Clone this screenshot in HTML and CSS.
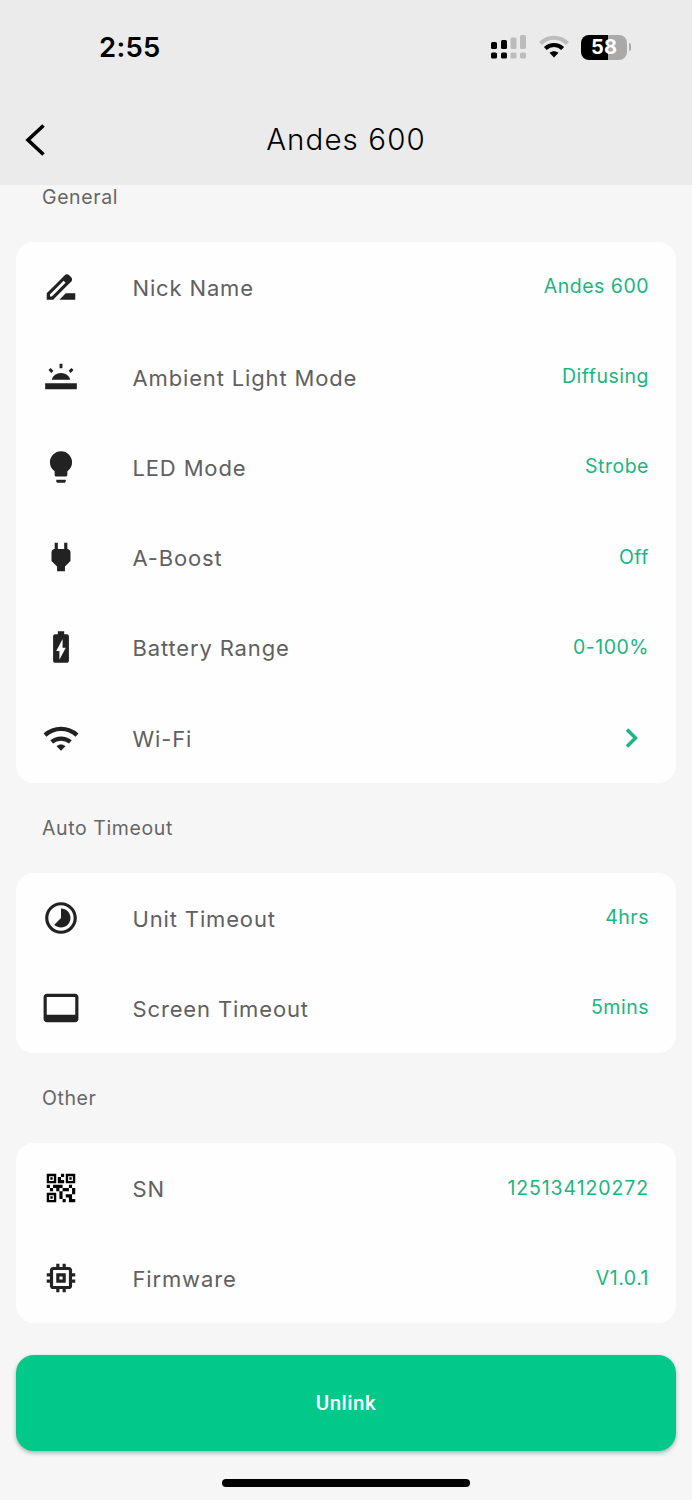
FILE: index.html
```html
<!DOCTYPE html>
<html lang="en">
<head>
  <meta charset="UTF-8">
  <meta name="viewport" content="width=device-width, initial-scale=1.0">
  <title>Andes 600</title>
  <link rel="stylesheet" href="styles.css">
</head>
<body>
  <header class="header">
    <div class="status-bar">
      <span class="time">2:55</span>
      <div class="status-icons">
        <svg class="signal" width="36" height="25" viewBox="0 0 36 25">
          <g fill="#000">
            <rect x="1" y="7" width="6" height="7" rx="1.5"/>
            <rect x="1" y="17.500" width="6" height="6" rx="1.5"/>
            <rect x="11" y="5" width="6" height="9" rx="1.5"/>
            <rect x="11" y="17.500" width="6" height="6" rx="1.5"/>
          </g>
          <g fill="#bcbcbc">
            <rect x="20.500" y="2.500" width="6" height="11.500" rx="1.5"/>
            <rect x="20.500" y="17.500" width="6" height="6" rx="1.5"/>
            <rect x="30" y="0" width="6" height="14" rx="1.5"/>
            <rect x="30" y="17.500" width="6" height="6" rx="1.5"/>
          </g>
        </svg>
        <svg class="status-wifi" width="32" height="24" viewBox="0 0 32 24" fill="none" stroke-width="4">
          <path d="M2.500 8.500C10 .8 22 .8 29.500 8.500" stroke="#bcbcbc"/>
          <path d="M7.300 13.500c5-4.800 12.400-4.800 17.400 0" stroke="#000"/>
          <path d="M16 22.500l-4.500-4.700c2.600-2.200 6.400-2.200 9 0z" fill="#000"/>
        </svg>
        <div class="battery">
          <span class="battery-level">58</span>
          <span class="battery-tip"></span>
        </div>
      </div>
    </div>
    <div class="nav">
      <svg class="back" width="24" height="36" viewBox="0 0 24 36" fill="none" stroke="#000" stroke-width="3.600">
        <path d="M20.500 3.500L5 18 20.500 32.500"/>
      </svg>
      <h1 class="title">Andes 600</h1>
    </div>
  </header>

  <main class="content">
    <h2 class="section-title first">General</h2>
    <div class="card">
      <div class="row">
        <svg class="icon" viewBox="0 0 24 24"><path d="M18.410 5.800L17.200 4.590c-.78-.78-2.050-.78-2.830 0l-2.680 2.680L3 15.960V20h4.040l8.740-8.740 2.630-2.630c.79-.78.79-2.050 0-2.830zM6.210 18H5v-1.210l8.660-8.660 1.210 1.210L6.210 18zM11 20l4-4h6v4H11z"/></svg>
        <span class="label">Nick Name</span>
        <span class="value">Andes 600</span>
      </div>
      <div class="row">
        <svg class="icon" viewBox="0 0 24 24"><path d="M2 16h20v3.700H2zM6.100 13.700a6.200 6.200 0 0 1 11.800 0zM11.100 3.700h1.800v2.700h-1.800zM4.100 7.600l1.300-1.300 1.800 1.800-1.300 1.300zM16.800 8.100l1.800-1.800 1.300 1.300-1.800 1.800z"/></svg>
        <span class="label">Ambient Light Mode</span>
        <span class="value">Diffusing</span>
      </div>
      <div class="row">
        <svg class="icon" viewBox="0 0 24 24"><path d="M9 21c0 .55.45 1 1 1h4c.55 0 1-.45 1-1v-1H9v1zm3-19C8.140 2 5 5.140 5 9c0 2.380 1.190 4.470 3 5.740V17c0 .55.45 1 1 1h6c.55 0 1-.45 1-1v-2.260c1.810-1.270 3-3.360 3-5.740 0-3.860-3.140-7-7-7z"/></svg>
        <span class="label">LED Mode</span>
        <span class="value">Strobe</span>
      </div>
      <div class="row">
        <svg class="icon" viewBox="0 0 24 24"><path d="M16.010 7L16 3h-2v4h-4V3H8v4h-.01C7 6.990 6 7.990 6 8.990v5.490L9.500 18v3h5v-3l3.500-3.510v-5.500c0-1-1-2-1.990-1.990z"/></svg>
        <span class="label">A-Boost</span>
        <span class="value">Off</span>
      </div>
      <div class="row">
        <svg class="icon" viewBox="0 0 24 24"><path d="M15.670 4H14V2h-4v2H8.330C7.600 4 7 4.600 7 5.330v15.330C7 21.400 7.600 22 8.330 22h7.330c.74 0 1.340-.6 1.340-1.330V5.330C17 4.600 16.400 4 15.670 4zM11 20v-5.500H9L13 7v5.500h2L11 20z"/></svg>
        <span class="label">Battery Range</span>
        <span class="value">0-100%</span>
      </div>
      <div class="row">
        <svg class="icon" viewBox="0 0 24 24"><g fill="none" stroke="#222" stroke-width="2.700"><path d="M1.900 10.200c5.800-5.200 14.400-5.200 20.200 0"/><path d="M6.100 14.500c3.400-2.900 8.400-2.900 11.800 0"/></g><path d="M12 20l-2.800-2.800c1.600-1.400 4-1.400 5.600 0z"/></svg>
        <span class="label">Wi-Fi</span>
        <svg class="chevron" width="14" height="20" viewBox="0 0 14 20" fill="none" stroke="#1cb57f" stroke-width="3.500"><path d="M2 1.500L10.500 10 2 18.500"/></svg>
      </div>
    </div>

    <h2 class="section-title">Auto Timeout</h2>
    <div class="card">
      <div class="row">
        <svg class="icon" viewBox="0 0 24 24"><path d="M16.240 7.760C15.070 6.590 13.540 6 12 6v6l-4.240 4.240c2.340 2.340 6.140 2.340 8.490 0 2.340-2.340 2.340-6.140-.01-8.480zM12 2C6.480 2 2 6.480 2 12s4.480 10 10 10 10-4.480 10-10S17.520 2 12 2zm0 18c-4.420 0-8-3.580-8-8s3.580-8 8-8 8 3.580 8 8-3.580 8-8 8z"/></svg>
        <span class="label">Unit Timeout</span>
        <span class="value">4hrs</span>
      </div>
      <div class="row">
        <svg class="icon" viewBox="0 0 24 24"><path d="M21 3H3c-1.100 0-2 .9-2 2v14c0 1.100.9 2 2 2h18c1.100 0 2-.9 2-2V5c0-1.100-.9-2-2-2zm0 13.300H3V5h18v11.300z"/></svg>
        <span class="label">Screen Timeout</span>
        <span class="value">5mins</span>
      </div>
    </div>

    <h2 class="section-title">Other</h2>
    <div class="card">
      <div class="row">
        <svg class="icon dark" viewBox="0 0 24 24"><path d="M15 21h-2v-2h2v2zm-2-7h-2v5h2v-5zm8-2h-2v4h2v-4zm-2-2h-2v2h2v-2zM7 12H5v2h2v-2zm-2-2H3v2h2v-2zm7-5h2V3h-2v2zm-7.500-.5v3h3v-3h-3zM9 9H3V3h6v6zm-4.500 7.500v3h3v-3h-3zM9 21H3v-6h6v6zm7.500-16.500v3h3v-3h-3zM21 9h-6V3h6v6zm-2 10v-3h-4v2h2v3h4v-2h-2zm-2-7h-4v2h4v-2zm-4-2H7v2h2v2h2v-2h2v-2zm1-1V7h-2V5h-2v4h4zM6.750 5.250h-1.500v1.500h1.500v-1.500zm0 12h-1.500v1.500h1.500v-1.500zm12-12h-1.500v1.500h1.500v-1.500z"/></svg>
        <span class="label">SN</span>
        <span class="value serial">125134120272</span>
      </div>
      <div class="row">
        <svg class="icon" viewBox="0 0 24 24"><path d="M15 9H9v6h6V9zm-2 4h-2v-2h2v2zm8-2V9h-2V7c0-1.100-.9-2-2-2h-2V3h-2v2h-2V3H9v2H7c-1.100 0-2 .9-2 2v2H3v2h2v2H3v2h2v2c0 1.100.9 2 2 2h2v2h2v-2h2v2h2v-2h2c1.100 0 2-.9 2-2v-2h2v-2h-2v-2h2zm-4 6H7V7h10v10z"/></svg>
        <span class="label">Firmware</span>
        <span class="value">V1.0.1</span>
      </div>
    </div>

    <button type="button" class="unlink">Unlink</button>
    <div class="home-bar"></div>
  </main>
</body>
</html>
```
FILE: styles.css
```css
* {
  box-sizing: border-box;
}

body {
  margin: 0;
  height: 1500px;
  overflow: hidden;
  background-color: #f6f6f6;
  font-family: Inter, Roboto, sans-serif;
}

.header {
  height: 185px;
  background-color: #ebebeb;
}

.status-bar {
  display: flex;
  justify-content: space-between;
  align-items: center;
  height: 94px;
  padding: 0 61px 0 99px;
}

.time {
  font-size: 27.500px;
  font-weight: 600;
  letter-spacing: 0.3px;
}

.status-icons {
  display: flex;
  align-items: center;
}

.status-wifi {
  margin: 0 11px 0 12px;
}

.battery {
  display: flex;
  align-items: center;
  gap: 2px;
}

.battery-level {
  width: 46px;
  height: 25px;
  border-radius: 8px;
  background: linear-gradient(to right, #000 58%, #a9a9a9 58%);
  color: #fff;
  font-size: 20px;
  font-weight: 700;
  line-height: 25px;
  text-align: center;
}

.battery-tip {
  width: 2px;
  height: 8px;
  border-radius: 0 2px 2px 0;
  background-color: #a9a9a9;
}

.nav {
  display: grid;
  grid-template-columns: 60px 1fr 60px;
  align-items: center;
  height: 91px;
}

.back {
  margin-left: 23px;
}

.title {
  margin: 0;
  padding-bottom: 1px;
  text-align: center;
  font-size: 29.500px;
  font-weight: 350;
  letter-spacing: 1.1px;
}

.content {
  padding: 0 16px;
}

.section-title {
  display: flex;
  align-items: center;
  height: 90px;
  margin: 0;
  padding-left: 26px;
  color: #666;
  font-size: 19.500px;
  font-weight: 400;
  letter-spacing: 0.6px;
}

.section-title.first {
  height: 56.500px;
  padding-bottom: 32px;
}

.card {
  border-radius: 18px;
  background-color: #fefefe;
}

.row {
  display: flex;
  align-items: center;
  height: 90.200px;
  padding: 0 27px 0 26px;
}

.icon {
  width: 38px;
  height: 38px;
  margin-right: 52.500px;
  fill: #222;
}

.icon.dark {
  fill: #000;
}

.label {
  flex: 1;
  padding-top: 2px;
  color: #606060;
  font-size: 22px;
  letter-spacing: 0.850px;
}

.value {
  padding-bottom: 1px;
  color: #1cb57f;
  font-size: 19.500px;
  letter-spacing: 0.5px;
}

.value.serial {
  letter-spacing: 0.9px;
}

.chevron {
  margin-right: 10px;
}

.unlink {
  display: block;
  width: 100%;
  height: 96px;
  margin-top: 31.500px;
  border: none;
  border-radius: 18px;
  background-color: #02c98a;
  box-shadow: 0 2px 4px rgba(0, 0, 0, 0.3);
  color: #fff;
  font-family: Roboto, sans-serif;
  font-size: 20.500px;
  font-weight: 500;
  letter-spacing: 0.5px;
}

.home-bar {
  width: 248px;
  height: 8px;
  margin: 28px auto 0;
  border-radius: 4px;
  background-color: #000;
}
```
